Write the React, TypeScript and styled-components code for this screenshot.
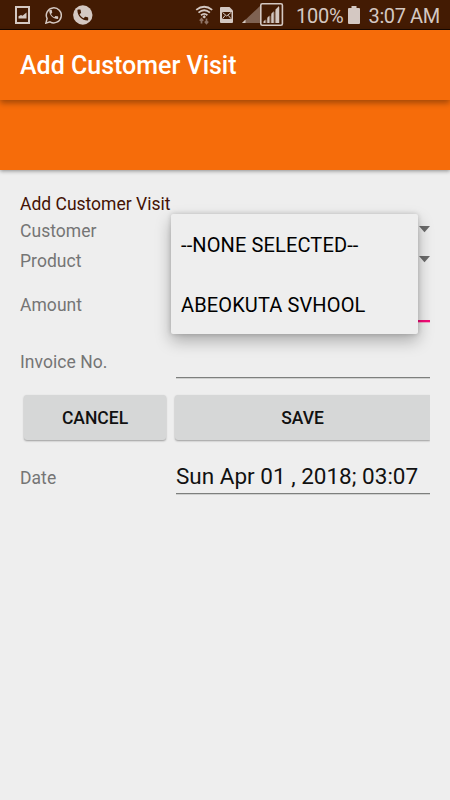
import React from 'react';
import styled, { createGlobalStyle } from 'styled-components';

const GlobalStyle = createGlobalStyle`
  * { box-sizing: border-box; }
  body { margin: 0; background: #eeeeee; font-family: Roboto, sans-serif; }
`;

const Screen = styled.div`
  width: 450px;
  height: 800px;
  overflow: hidden;
  background: #eeeeee;
`;

const StatusBar = styled.div`
  height: 30px;
  display: flex;
  align-items: center;
  background: #431b03;
  border-bottom: 1px solid #160800;
  color: #d4c8c2;
`;

const StatusIcon = styled.svg<{ $gap?: number }>`
  display: block;
  flex: none;
  margin-left: ${({ $gap = 0 }) => $gap}px;
`;

const StatusText = styled.span<{ $gap: number; $spacing?: number }>`
  margin-left: ${({ $gap }) => $gap}px;
  padding-top: 3px;
  font-size: 20px;
  line-height: 24px;
  letter-spacing: ${({ $spacing = 0 }) => $spacing}px;
  white-space: nowrap;
`;

const Toolbar = styled.header`
  position: relative;
  height: 70px;
  display: flex;
  align-items: center;
  padding: 2px 20px 0;
  background: #f66c0a;
  box-shadow: 0 3px 6px rgba(0, 0, 0, 0.34);
  z-index: 1;
`;

const Title = styled.h1`
  margin: 0;
  font-size: 25px;
  font-weight: 500;
  line-height: 30px;
  color: #fff;
  white-space: nowrap;
`;

const Banner = styled.div`
  height: 70px;
  background: #f66c0a;
  box-shadow: 0 1px 4px rgba(0, 0, 0, 0.42);
`;

const Form = styled.main`
  position: relative;
  padding: 23px 20px 0;
`;

const Heading = styled.h2`
  margin: 0;
  height: 23px;
  font-size: 17.5px;
  font-weight: 400;
  line-height: 22px;
  color: #431203;
`;

const Row = styled.div<{ $height: number }>`
  height: ${({ $height }) => $height}px;
  display: grid;
  grid-template-columns: 156px 254px;
  align-items: center;
`;

const Label = styled.label`
  font-size: 17.5px;
  line-height: 22px;
  letter-spacing: 0.05px;
  color: #757575;
`;

const Spinner = styled.div`
  height: 30px;
  display: flex;
  justify-content: flex-end;
  padding-top: 10px;
`;

const Field = styled.div<{ $focused?: boolean; $height: number }>`
  align-self: start;
  height: ${({ $height }) => $height}px;
  display: flex;
  align-items: flex-end;
  padding-bottom: 3px;
  border-bottom: ${({ $focused }) => ($focused ? '2px solid #f50a77' : '1px solid #7d7f7d')};
  box-shadow: 0 1px 0 ${({ $focused }) => ($focused ? '#f3a5c6' : '#cfd0cf')};
  font-size: 22.5px;
  line-height: 27px;
  color: #111;
  white-space: nowrap;
`;

const Actions = styled.div`
  height: 58px;
  display: flex;
  gap: 9px;
  padding: 5px 0 0 4px;
`;

const Button = styled.button<{ $width: number; $clipped?: boolean }>`
  width: ${({ $width }) => $width}px;
  height: 45px;
  flex: none;
  border: 0;
  padding: 1px 0 0;
  border-radius: ${({ $clipped }) => ($clipped ? '3px 0 0 3px' : '3px')};
  background: #d6d7d7;
  box-shadow: 0 1px 2px rgba(0, 0, 0, 0.35);
  clip-path: inset(-3px ${({ $clipped }) => ($clipped ? 0 : -3)}px -4px -3px);
  font: 500 17.5px/22px Roboto, sans-serif;
  color: #111;
`;

const Menu = styled.div`
  position: absolute;
  top: 44px;
  left: 171px;
  width: 247px;
  height: 120px;
  border-radius: 2px;
  background: #eeeeee;
  box-shadow: 0 7px 16px rgba(0, 0, 0, 0.28), 0 0 5px rgba(0, 0, 0, 0.18);
`;

const MenuItem = styled.div`
  height: 60px;
  padding: 1px 10px 0;
  display: flex;
  align-items: center;
  font-size: 20px;
  letter-spacing: 0.13px;
  color: #000;
  white-space: nowrap;
`;

const Arrow = () => (
  <svg width="11" height="7" viewBox="0 0 11 7">
    <path d="M0 0H11L5.5 6.3Z" fill="#6b6b6b" />
  </svg>
);

const HANDSET =
  'M6.6 10.8c1.4 2.8 3.8 5.1 6.6 6.6l2.2-2.2c.3-.3.7-.4 1-.2 1.1.4 2.3.6 3.6.6.6 0 1 .4 1 1V20c0 .6-.4 1-1 1C10.6 21 3 13.4 3 4c0-.6.4-1 1-1h3.5c.6 0 1 .4 1 1 0 1.300.2 2.500.6 3.600.1.300 0 .7-.2 1Z';

const StatusIcons = () => (
  <>
    <StatusIcon $gap={15} width="15" height="18" viewBox="0 0 15 18">
      <path d="M0 0H15V18H0ZM2 2V16H13V2Z" fill="currentColor" fillRule="evenodd" />
      <path d="M3.5 12.5V10.2L6 9L7.5 9.800L11.5 6.500V12.5Z" fill="currentColor" />
    </StatusIcon>
    <StatusIcon $gap={15} width="17" height="18" viewBox="0 0 17 18">
      <path d="M.9 17.1L2.1 12.7A7.5 7.5 0 1 1 5 15.8Z" fill="none" stroke="currentColor" strokeWidth="1.5" />
      <g transform="translate(2.7 2.500) scale(.5)">
        <path d={HANDSET} fill="currentColor" />
      </g>
    </StatusIcon>
    <StatusIcon $gap={11} width="20" height="20" viewBox="0 0 20 20">
      <circle cx="9.8" cy="10" r="9.7" fill="currentColor" />
      <g transform="translate(2.6 2.8) scale(.6)">
        <path d={HANDSET} fill="#431b03" />
      </g>
    </StatusIcon>
    <StatusIcon $gap={102} width="19" height="20" viewBox="0 0 19 20">
      <g fill="none" stroke="currentColor" strokeWidth="1.8">
        <path d="M1.2 4.9Q9.2-1.5 17.2 4.9" />
        <path d="M3.5 7.6Q9.2 3 14.9 7.6" />
        <path d="M6 10.2Q9.2 7.6 12.4 10.2" />
      </g>
      <path d="M9.2 10L11 12L9.2 13.5L7.4 12Z" fill="currentColor" />
      <path d="M6.5 18.500V14M4.8 15.7L6.5 13.7L8.2 15.7M11.5 13.5V18M9.8 16.500L11.5 18.500L13.2 16.500" fill="none" stroke="#8d7163" strokeWidth="1.7" />
    </StatusIcon>
    <StatusIcon $gap={6} width="13" height="16" viewBox="0 0 13 16">
      <path d="M1 0H9.5L13 3.5V15Q13 16 12 16H1Q0 16 0 15V1Q0 0 1 0Z" fill="currentColor" />
      <rect x="2" y="5" width="9.500" height="7" fill="#431b03" />
      <path d="M2.5 5.500L6.700 9L11 5.500M2.5 11.700L5.300 8.300M11 11.700L8.200 8.300" fill="none" stroke="currentColor" strokeWidth="1" />
    </StatusIcon>
    <StatusIcon $gap={9} width="42" height="23" viewBox="0 0 42 23">
      <path d="M0 20L18 3V20Z" fill="#7f6252" />
      <path d="M0 20L3.500 16.500V20Z" fill="currentColor" />
      <rect x="18.8" y=".8" width="21.6" height="21.4" rx="1.5" fill="none" stroke="currentColor" strokeWidth="1.6" />
      <path d="M21.5 20V18.500L23.5 16.500V20ZM25.3 20V14.7L27.500 12.500V20ZM29.3 20V10.700L31.700 8.300V20ZM33.500 20V6.500L37 3V20Z" fill="currentColor" />
      <path d="M21.5 20L38 3.500V20Z" fill="currentColor" opacity=".25" />
    </StatusIcon>
  </>
);

export default function App() {
  return (
    <>
      <GlobalStyle />
      <Screen>
        <StatusBar>
          <StatusIcons />
          <StatusText $gap={12} $spacing={-0.2}>100%</StatusText>
          <StatusIcon $gap={4} width="12" height="18" viewBox="0 0 12 18">
            <path d="M3.5 0H8.5V2H11Q12 2 12 3V17Q12 18 11 18H1Q0 18 0 17V3Q0 2 1 2H3.5Z" fill="currentColor" />
          </StatusIcon>
          <StatusText $gap={9} $spacing={-0.4}>3:07 AM</StatusText>
        </StatusBar>
        <Toolbar>
          <Title>Add Customer Visit</Title>
        </Toolbar>
        <Banner />
        <Form>
          <Heading>Add Customer Visit</Heading>
          <Row $height={30}>
            <Label>Customer</Label>
            <Spinner><Arrow /></Spinner>
          </Row>
          <Row $height={30}>
            <Label>Product</Label>
            <Spinner><Arrow /></Spinner>
          </Row>
          <Row $height={57}>
            <Label>Amount</Label>
            <Field $focused $height={46} />
          </Row>
          <Row $height={57}>
            <Label>Invoice No.</Label>
            <Field $height={45} />
          </Row>
          <Actions>
            <Button $width={142}>CANCEL</Button>
            <Button $width={255} $clipped>SAVE</Button>
          </Actions>
          <Row $height={59}>
            <Label>Date</Label>
            <Field $height={46}>Sun Apr 01 , 2018; 03:07</Field>
          </Row>
          <Menu>
            <MenuItem>--NONE SELECTED--</MenuItem>
            <MenuItem>ABEOKUTA SVHOOL</MenuItem>
          </Menu>
        </Form>
      </Screen>
    </>
  );
}
